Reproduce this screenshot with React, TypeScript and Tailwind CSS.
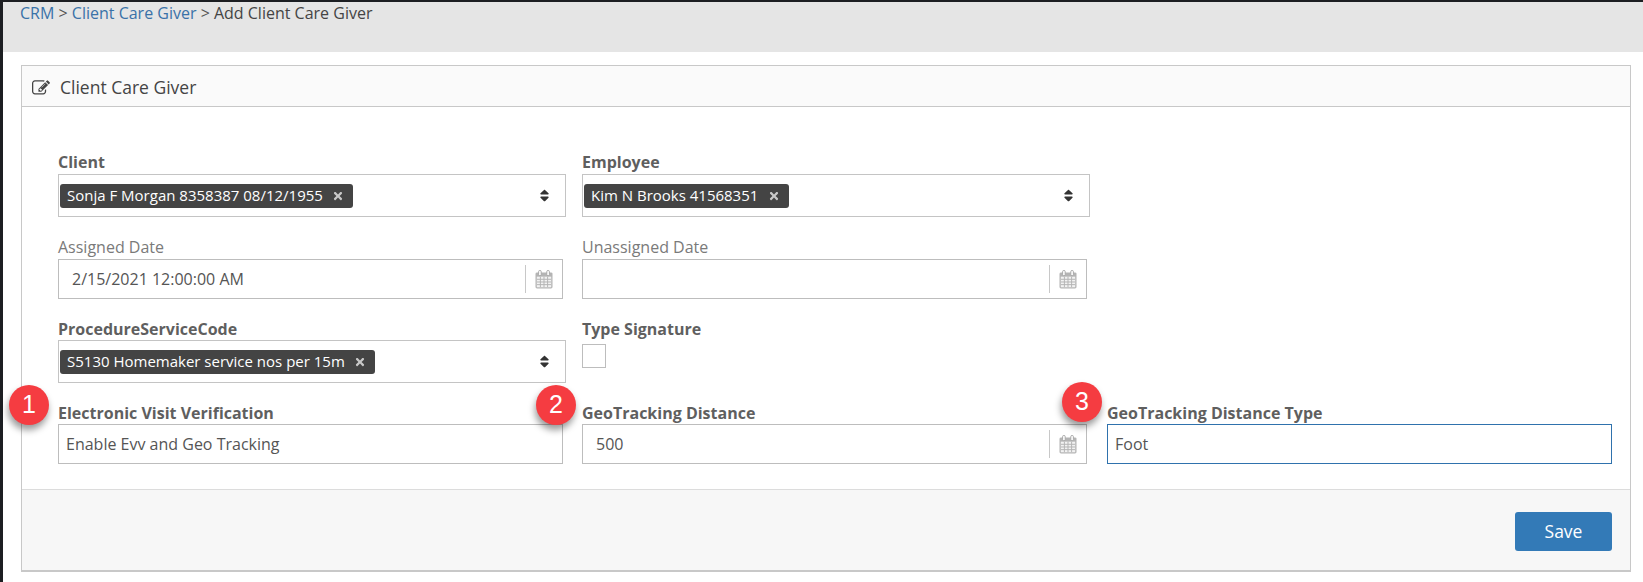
import { FaSort, FaTimes } from "react-icons/fa";

function Cal() {
  return (
    <svg width="18" height="19" viewBox="0 0 18 20" preserveAspectRatio="none" className="shrink-0">
      <rect x="0.5" y="2.5" width="17" height="17" rx="1.5" fill="#b4b4b4" />
      <rect x="1.8" y="7" width="14.4" height="11.2" fill="#f2f2f2" />
      <path d="M5.4 7v11M9 7v11M12.6 7v11M2 9.8h14M2 12.6h14M2 15.4h14" stroke="#b4b4b4" strokeWidth="1" fill="none" />
      <rect x="3.6" y="0.5" width="2.6" height="5.5" rx="1.2" fill="#fff" stroke="#a8a8a8" />
      <rect x="11.8" y="0.5" width="2.6" height="5.5" rx="1.2" fill="#fff" stroke="#a8a8a8" />
    </svg>
  );
}

function EditIcon() {
  return (
    <svg width="18" height="18" viewBox="0 0 1792 1792" fill="#444" className="shrink-0">
      <path d="M888 1184l116-116-152-152-116 116v56h96v96h56zm440-720q-16-16-33 1l-350 350q-17 17-1 33t33-1l350-350q17-17 1-33zm80 594v190q0 119-84.5 203.5t-203.5 84.5h-832q-119 0-203.5-84.5t-84.5-203.5v-832q0-119 84.5-203.5t203.5-84.5h832q63 0 117 25 15 7 18 23 3 17-9 29l-49 49q-14 14-32 8-23-6-45-6h-832q-66 0-113 47t-47 113v832q0 66 47 113t113 47h832q66 0 113-47t47-113v-126q0-13 9-22l64-64q15-15 35-7t20 29zm-96-738l288 288-672 672h-288v-288zm444 132l-92 92-288-288 92-92q28-28 68-28t68 28l152 152q28 28 28 68t-28 68z" />
    </svg>
  );
}

function Label({ children, muted }: { children: React.ReactNode; muted?: boolean }) {
  return (
    <div className={muted ? "text-[16px] leading-[20px] text-[#7a7a7a]" : "text-[16px] leading-[20px] font-bold text-[#5f5f5f]"}>
      {children}
    </div>
  );
}

function Sel({ text, chip }: { text: string; chip: string }) {
  return (
    <div className="w-[508px] h-[43px] border border-[#c4c4c4] flex items-center pl-[1px] pr-[13px] justify-between">
      <span className={`${chip} h-[24px] bg-[#444444] rounded-[3px] text-white text-[15px] flex items-center justify-between pl-[7px] pr-[9px]`}>
        <span className="whitespace-nowrap">{text}</span>
        <FaTimes className="text-[#c8c8c8] text-[12px]" />
      </span>
      <FaSort className="text-[#333] text-[15px]" />
    </div>
  );
}

function DateBox({ value }: { value?: string }) {
  return (
    <div className="w-[505px] h-[40px] border border-[#bdbdbd] flex items-center pl-[13px] pr-[9px] text-[16px] text-[#555]">
      <span className="flex-1">{value}</span>
      <span className="w-px h-[28px] bg-[#c8c8c8] mr-[9px]" />
      <Cal />
    </div>
  );
}

function Badge({ n, cls }: { n: string; cls: string }) {
  return (
    <div
      className={`absolute ${cls} w-[40px] h-[40px] rounded-full bg-[#f53c41] text-white text-[25px] flex items-center justify-center shadow-[-1px_5px_7px_rgba(0,0,0,0.4)]`}
      style={{ fontFamily: '"Liberation Sans", sans-serif' }}
    >
      {n}
    </div>
  );
}

export default function App() {
  return (
    <div
      className="w-[1643px] h-[582px] overflow-hidden bg-[#1c1e22] pl-[3px] pt-[2px]"
      style={{ fontFamily: '"Open Sans", sans-serif' }}
    >
      <div className="h-[580px] bg-white flex flex-col">
        <div className="h-[50px] shrink-0 bg-[#e5e5e5] pl-[17px] pt-[1px] text-[16px] leading-[20px] text-[#555]">
          <span className="text-[#3a72a8]">CRM</span> &gt; <span className="text-[#3a72a8]">Client Care Giver</span> &gt;{" "}
          <span className="text-[#444]">Add Client Care Giver</span>
        </div>
        <div className="ml-[18px] mr-[12px] mt-[13px] h-[507px] border border-[#c8c8c8] border-b-2 flex flex-col">
          <div className="h-[41px] shrink-0 bg-[#fafafa] border-b border-[#c8c8c8] flex items-center pl-[10px] pt-[3px] gap-[10px] text-[17.5px] text-[#444]">
            <EditIcon />
            <span>Client Care Giver</span>
          </div>
          <div className="relative flex-1 pl-[36px] pt-[45px]">
            <div className="grid grid-cols-[524px_525px_506px]">
              <div className="h-[85px]">
                <Label>Client</Label>
                <div className="mt-[2px]"><Sel text="Sonja F Morgan 8358387 08/12/1955" chip="w-[293px]" /></div>
              </div>
              <div className="h-[85px]">
                <Label>Employee</Label>
                <div className="mt-[2px]"><Sel text="Kim N Brooks 41568351" chip="w-[205px]" /></div>
              </div>
              <div />
              <div className="h-[82px]">
                <Label muted>Assigned Date</Label>
                <div className="mt-[2px]"><DateBox value="2/15/2021 12:00:00 AM" /></div>
              </div>
              <div className="h-[82px]">
                <Label muted>Unassigned Date</Label>
                <div className="mt-[2px]"><DateBox /></div>
              </div>
              <div />
              <div className="h-[84px]">
                <Label>ProcedureServiceCode</Label>
                <div className="mt-[1px]"><Sel text="S5130 Homemaker service nos per 15m" chip="w-[315px]" /></div>
              </div>
              <div className="h-[84px]">
                <Label>Type Signature</Label>
                <div className="mt-[5px] w-[24px] h-[24px] border border-[#bdbdbd]" />
              </div>
              <div />
              <div>
                <Label>Electronic Visit Verification</Label>
                <div className="mt-[1px] w-[505px] h-[40px] border border-[#bdbdbd] flex items-center pl-[7px] text-[16px] text-[#555]">
                  Enable Evv and Geo Tracking
                </div>
              </div>
              <div>
                <Label>GeoTracking Distance</Label>
                <div className="mt-[1px]"><DateBox value="500" /></div>
              </div>
              <div>
                <Label>GeoTracking Distance Type</Label>
                <div className="mt-[1px] w-[505px] h-[40px] border border-[#2f72ad] flex items-center pl-[7px] text-[16px] text-[#555]">
                  Foot
                </div>
              </div>
            </div>
            <Badge n="1" cls="left-[-13px] top-[278px]" />
            <Badge n="2" cls="left-[514px] top-[278px]" />
            <Badge n="3" cls="left-[1040px] top-[275px]" />
          </div>
          <div className="h-[81px] shrink-0 bg-[#f7f7f7] border-t border-[#dcdcdc] flex justify-end pr-[18px] pt-[22px]">
            <div className="w-[97px] h-[39px] bg-[#337ab7] rounded-[3px] text-white text-[17.5px] flex items-center justify-center">
              Save
            </div>
          </div>
        </div>
      </div>
    </div>
  );
}
